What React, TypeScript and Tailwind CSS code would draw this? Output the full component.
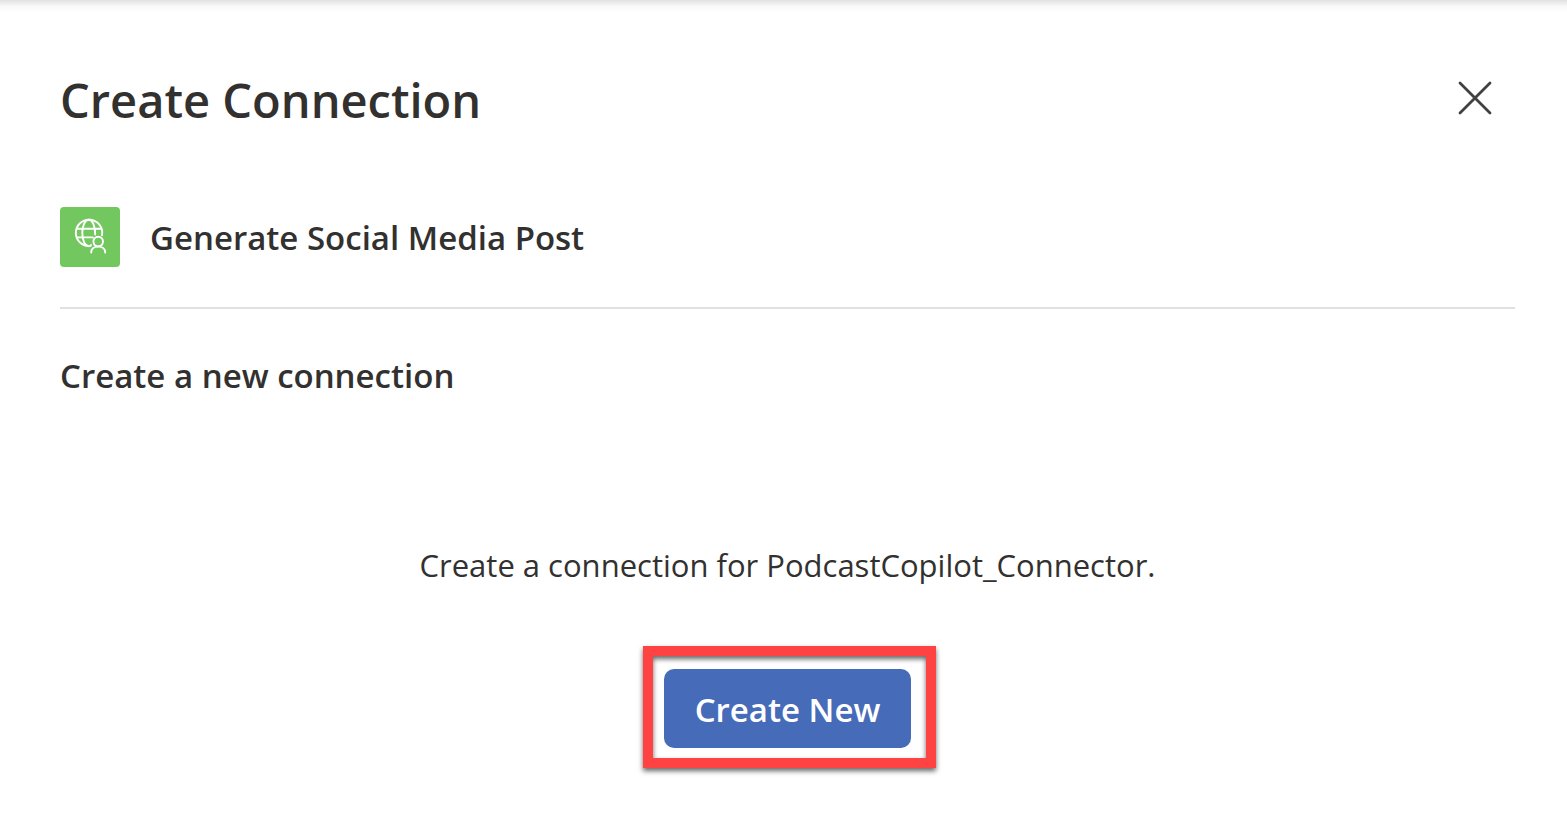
import React from "react";

function ConnectorIcon() {
  return (
    <div className="flex size-[60px] shrink-0 items-center justify-center rounded bg-[#73c75f]">
      <svg
        viewBox="0 0 60 60"
        className="size-full"
        fill="none"
        stroke="white"
        strokeWidth="1.9"
        strokeLinecap="round"
        aria-hidden="true"
      >
        <path d="M42 28.3A13.2 13.2 0 1 0 30.5 39" />
        <path d="M35.2 27.6C35.3 19.5 32.6 12.8 28.8 12.8C25 12.8 22.3 18.5 22.3 26S25 39.2 28.8 39.2C29.6 39.2 30.4 38.8 31 38" />
        <path d="M17 21.8H40.8M17 30.4H32.8" />
        <circle cx="38.2" cy="34.6" r="4.8" />
        <path d="M31.2 45.6C31.2 42.2 33.8 39.6 38.2 39.6S45.2 42.2 45.2 45.6" />
      </svg>
    </div>
  );
}

export default function App() {
  return (
    <div className="min-h-screen bg-white font-['Open_Sans','Noto_Sans',sans-serif] text-[#323130]">
      <div className="h-3 bg-linear-to-b from-[#e1e1e1] via-[#f8f8f8] to-white" />
      <main className="pr-[52px] pb-16 pl-[60px]">
        <header className="flex items-start justify-between pt-[46px]">
          <h1 className="pt-2.5 text-[47px] leading-[64px] font-semibold">Create Connection</h1>
          <button type="button" aria-label="Close" className="p-5">
            <svg viewBox="0 0 40 40" className="size-10" stroke="#414141" strokeWidth="2.8" strokeLinecap="round" aria-hidden="true">
              <path d="M5 5L35 35M35 5L5 35" />
            </svg>
          </button>
        </header>

        <section className="mt-[69px] flex items-center gap-[30px] border-b-2 border-[#e0e0e0] pb-10">
          <ConnectorIcon />
          <h2 className="pt-0.5 text-[33px] leading-[44px] font-semibold">Generate Social Media Post</h2>
        </section>

        <section>
          <h3 className="mt-[45px] text-[33px] leading-[44px] font-semibold">Create a new connection</h3>
          <div className="mt-[145px] flex flex-col items-center">
            <p className="text-center text-[31px] leading-[44px]">
              Create a connection for PodcastCopilot_Connector.
            </p>
            <div className="relative mt-[82px]">
              <button
                type="button"
                className="h-[79px] w-[247px] rounded-[10px] bg-[#466bb9] pt-0.5 text-[33px] leading-[44px] font-semibold whitespace-nowrap text-white"
              >
                Create New
              </button>
              <div className="pointer-events-none absolute -top-[23px] -right-[25px] -bottom-[20px] -left-[21px] border-10 border-[#ff4343] shadow-[0_3px_5px_rgba(0,0,0,0.6),inset_0_3px_5px_rgba(0,0,0,0.6)]" />
            </div>
          </div>
        </section>
      </main>
    </div>
  );
}
